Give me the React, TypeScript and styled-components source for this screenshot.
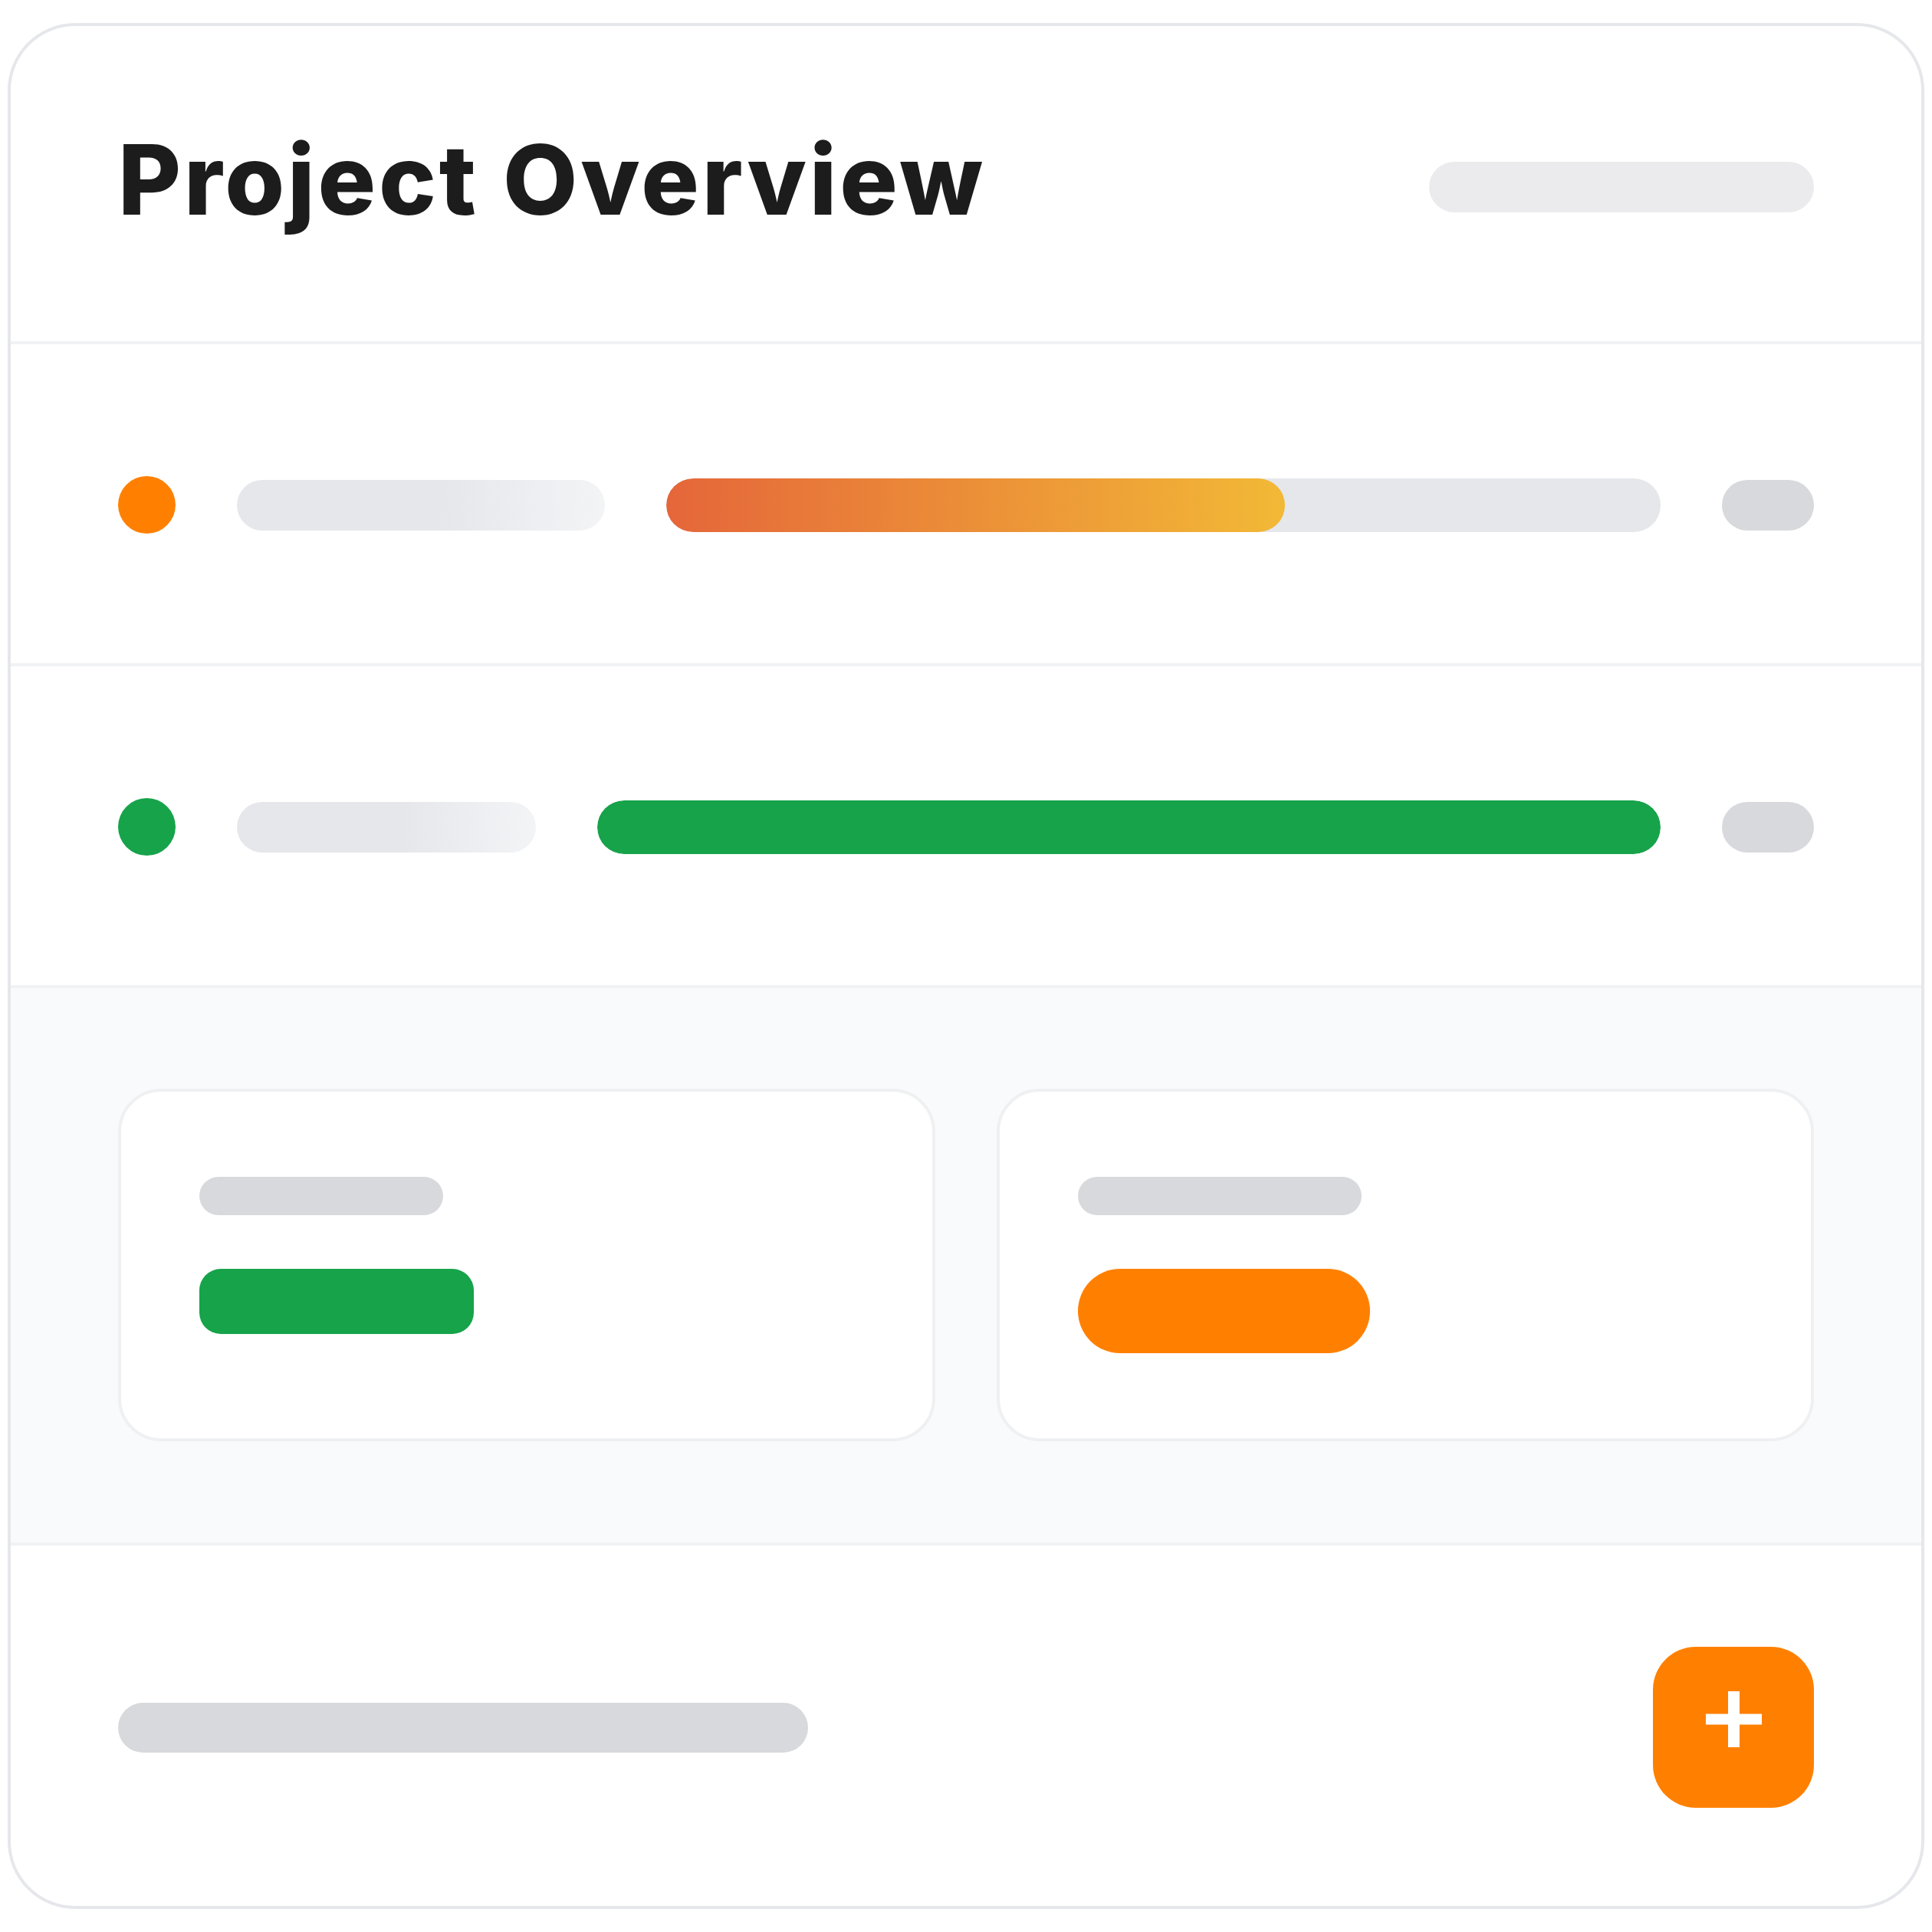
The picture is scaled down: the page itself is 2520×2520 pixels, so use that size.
import React from "react";
import styled, { createGlobalStyle } from "styled-components";

const Global = createGlobalStyle`
  html, body { margin: 0; padding: 0; background: #ffffff; }
  body { font-family: Inter, "Liberation Sans", sans-serif; }
`;

const Page = styled.div`
  padding: 30px 10px 32px;
`;

const Frame = styled.div`
  width: 2500px;
  box-sizing: border-box;
  border: 4px solid #e5e7eb;
  border-radius: 88px;
  overflow: hidden;
  background: #ffffff;
  display: flex;
  flex-direction: column;
`;

const Header = styled.header`
  height: 411px;
  padding: 0 140px;
  display: flex;
  align-items: center;
  justify-content: space-between;
  border-bottom: 4px solid #f1f2f4;
`;

const Title = styled.h1`
  margin: 0 0 11px;
  font-family: Inter, "Liberation Sans", sans-serif;
  font-weight: 800;
  font-size: 126px;
  line-height: 1;
  letter-spacing: 3.8px;
  color: #1c1c1c;
`;

const Bar = styled.div<{ $w?: number; $h: number; $bg: string; $r?: number }>`
  flex: ${(p) => (p.$w ? "none" : "1")};
  width: ${(p) => (p.$w ? `${p.$w}px` : "auto")};
  height: ${(p) => p.$h}px;
  background: ${(p) => p.$bg};
  border-radius: ${(p) => (p.$r !== undefined ? `${p.$r}px` : "999px")};
`;

const HeaderPill = styled(Bar)`
  margin-top: 9px;
`;

const Row = styled.div`
  height: 413px;
  padding: 3px 140px 0;
  display: flex;
  align-items: center;
  gap: 80px;
  border-bottom: 4px solid #f1f2f4;
`;

const Dot = styled.span<{ $color: string }>`
  flex: none;
  width: 75px;
  height: 75px;
  border-radius: 50%;
  background: ${(p) => p.$color};
`;

const Track = styled.div`
  flex: 1;
  height: 70px;
  border-radius: 999px;
  background: #e5e7eb;
  overflow: hidden;
  display: flex;
`;

const Fill = styled.div<{ $bg: string }>`
  height: 100%;
  border-radius: 999px;
  background: ${(p) => p.$bg};
`;

const Panel = styled.section`
  padding: 131px 140px 132px;
  background: #f9fafb;
  display: grid;
  grid-template-columns: 1fr 1fr;
  gap: 80px;
  border-bottom: 4px solid #f1f2f4;
`;

const StatCard = styled.div`
  background: #ffffff;
  border: 4px solid #eff0f2;
  border-radius: 56px;
  padding: 111px 102px;
  display: flex;
  flex-direction: column;
  align-items: flex-start;
  gap: 70px;
`;

const Footer = styled.footer`
  padding: 132px 140px 128px;
  display: flex;
  align-items: center;
  justify-content: space-between;
`;

const AddButton = styled.button`
  width: 210px;
  height: 210px;
  border: none;
  border-radius: 56px;
  background: #ff8000;
  padding: 0;
  display: flex;
  align-items: center;
  justify-content: center;
  cursor: pointer;
`;

const PlusIcon = styled.svg`
  width: 73px;
  height: 73px;
  margin-bottom: 22px;
`;

const labelGrad = "linear-gradient(90deg, #e5e7eb 0%, #e5e7eb 55%, #f3f4f6 100%)";
const warmGrad = "linear-gradient(90deg, #e5663a 0%, #f2b936 100%)";

export default function App() {
  return (
    <>
      <Global />
      <Page>
        <Frame>
          <Header>
            <Title>Project Overview</Title>
            <HeaderPill $w={502} $h={66} $bg="#ebebed" />
          </Header>

          <Row>
            <Dot $color="#ff8000" />
            <Bar $w={480} $h={66} $bg={labelGrad} />
            <Track>
              <Fill $bg={warmGrad} style={{ width: "62.2%" }} />
            </Track>
            <Bar $w={120} $h={66} $bg="#d8d9dc" />
          </Row>

          <Row>
            <Dot $color="#16a34a" />
            <Bar $w={390} $h={66} $bg={labelGrad} />
            <Track>
              <Fill $bg="#16a34a" style={{ width: "100%" }} />
            </Track>
            <Bar $w={120} $h={66} $bg="#d8d9dc" />
          </Row>

          <Panel>
            <StatCard>
              <Bar $w={318} $h={50} $bg="#d8d9dc" />
              <Bar $w={358} $h={85} $bg="#16a34a" $r={28} />
            </StatCard>
            <StatCard>
              <Bar $w={370} $h={50} $bg="#d8d9dc" />
              <Bar $w={381} $h={110} $bg="#ff8000" />
            </StatCard>
          </Panel>

          <Footer>
            <Bar $w={900} $h={65} $bg="#d8d9dc" />
            <AddButton aria-label="Add">
              <PlusIcon viewBox="0 0 73 73">
                <rect x="29" y="0" width="15" height="73" fill="#ffffff" />
                <rect x="0" y="29.5" width="73" height="14" fill="#ffffff" />
              </PlusIcon>
            </AddButton>
          </Footer>
        </Frame>
      </Page>
    </>
  );
}
